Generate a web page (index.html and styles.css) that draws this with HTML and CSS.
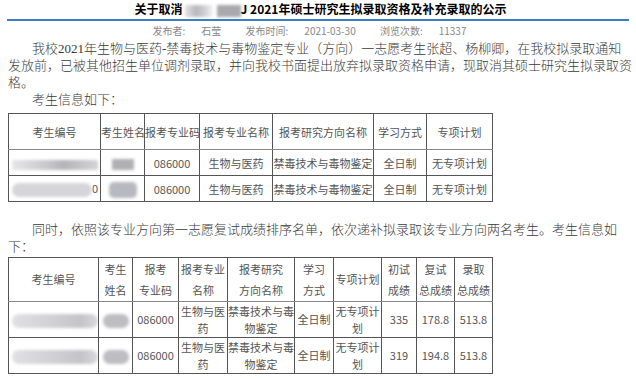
FILE: index.html
```html
<!DOCTYPE html>
<html lang="zh-CN">
<head>
    <meta charset="UTF-8">
    <meta name="viewport" content="width=device-width, initial-scale=1.0">
    <title>关于取消2021年硕士研究生拟录取资格及补充录取的公示</title>
    <link rel="stylesheet" href="styles.css">
</head>
<body>
    <div class="page">
        <h1 class="title">关于取消<span class="blur blur-title"></span><span class="blur blur-title2"></span>J 2021年硕士研究生拟录取资格及补充录取的公示</h1>
        <div class="rule"></div>
        <div class="meta">
            <span>发布者:</span><span class="val">石莹</span>
            <span>发布时间:</span><span class="val">2021-03-30</span>
            <span>浏览次数:</span><span class="val">11337</span>
        </div>

        <p class="text indent">我校2021年生物与医药-禁毒技术与毒物鉴定专业（方向）一志愿考生张超、杨柳卿，在我校拟录取通知发放前，已被其他招生单位调剂录取，并向我校书面提出放弃拟录取资格申请，现取消其硕士研究生拟录取资格。</p>
        <p class="text indent">考生信息如下：</p>

        <table class="grid grid-one">
            <colgroup>
                <col style="width:92px"><col style="width:44px"><col style="width:55px"><col style="width:73px">
                <col style="width:101px"><col style="width:53px"><col style="width:66px">
            </colgroup>
            <tr class="head">
                <td>考生编号</td><td>考生姓名</td><td>报考专业码</td><td>报考专业名称</td>
                <td>报考研究方向名称</td><td>学习方式</td><td>专项计划</td>
            </tr>
            <tr class="row">
                <td class="left"><span class="blur blur-id"></span></td>
                <td><span class="blur blur-name"></span></td>
                <td>086000</td><td>生物与医药</td><td>禁毒技术与毒物鉴定</td><td>全日制</td><td>无专项计划</td>
            </tr>
            <tr class="row">
                <td class="left"><span class="blur blur-id round"></span>0</td>
                <td><span class="blur blur-name dark"></span></td>
                <td>086000</td><td>生物与医药</td><td>禁毒技术与毒物鉴定</td><td>全日制</td><td>无专项计划</td>
            </tr>
        </table>

        <p class="text indent second">同时，依照该专业方向第一志愿复试成绩排序名单，依次递补拟录取该专业方向两名考生。考生信息如下：</p>

        <table class="grid grid-two">
            <colgroup>
                <col style="width:90px"><col style="width:34px"><col style="width:46px"><col style="width:49px">
                <col style="width:67px"><col style="width:39px"><col style="width:48px"><col style="width:35px">
                <col style="width:38px"><col style="width:38px">
            </colgroup>
            <tr class="head">
                <td>考生编号</td><td>考生<br>姓名</td><td>报考<br>专业码</td><td>报考专业<br>名称</td>
                <td>报考研究<br>方向名称</td><td>学习<br>方式</td><td>专项计划</td>
                <td>初试<br>成绩</td><td>复试<br>总成绩</td><td>录取<br>总成绩</td>
            </tr>
            <tr class="row">
                <td class="left"><span class="blur blur-id wide"></span></td>
                <td><span class="blur blur-name small"></span></td>
                <td>086000</td><td>生物与医<br>药</td><td>禁毒技术与毒<br>物鉴定</td><td>全日制</td>
                <td>无专项计<br>划</td><td>335</td><td>178.8</td><td>513.8</td>
            </tr>
            <tr class="row">
                <td class="left"><span class="blur blur-id wide"></span></td>
                <td><span class="blur blur-name small dark"></span></td>
                <td>086000</td><td>生物与医<br>药</td><td>禁毒技术与毒<br>物鉴定</td><td>全日制</td>
                <td>无专项计<br>划</td><td>319</td><td>194.8</td><td>513.8</td>
            </tr>
        </table>
    </div>
</body>
</html>
```

FILE: styles.css
```css
body { margin: 0; background: #fff; }
.page { width: 625px; padding-left: 8px; }

.title { margin: 0; height: 18px; font: bold 12px/18px "Noto Sans CJK SC", sans-serif; color: #000; text-align: center; }
.rule { height: 2px; width: 622px; margin-left: -1px; margin-top: 1px; background: #3d7cc9; }
.meta { margin-top: 3px; font: 10px/14px "Noto Sans CJK SC", sans-serif; color: #888; text-align: center; }
.meta span { margin-right: 16px; }
.meta .val { margin-right: 22px; }

.text { margin: 0; font: 300 13px/17px "Liberation Serif", "Noto Sans CJK SC", serif; color: #3a3a3a; }
.indent { text-indent: 24px; }
.text:first-of-type { margin-top: 2px; }
.second { margin-top: 19px; margin-bottom: 2px; }

.grid { border-collapse: collapse; table-layout: fixed; width: 485px; font: 11px "Noto Sans CJK SC", sans-serif; color: #555; }
.grid-one { margin-top: 5px; }
.grid td { border: 1px solid #555; padding: 0; text-align: center; vertical-align: middle; white-space: nowrap; overflow: hidden; }
.grid .head td { border-bottom-color: #888; }
.grid-one .head td { height: 35px; }
.grid-one .row td { height: 25px; }
.grid-two .head td { height: 43px; line-height: 21px; }
.grid-two .row td { height: 35px; line-height: 17px; }
.grid td.left { text-align: left; }

.blur { display: inline-block; vertical-align: middle; background: #c9c9ce; filter: blur(1.5px); }
.blur-title { width: 28px; height: 12px; margin-left: 2px; background: linear-gradient(90deg, #e4e4e8 0, #b8b8bc 40%, #d0d0d4 70%, #f4f4f6 100%); }
.blur-title2 { width: 24px; height: 12px; margin-left: 4px; background: #a8a8ad; }
.blur-id { width: 86px; height: 10px; margin-left: 3px; background: linear-gradient(90deg, #e6e6e8, #c8c8cc 40%, #b4b4b8 60%, #d4d4d8); }
.blur-id.round { width: 80px; height: 14px; border-radius: 7px; background: #d6d6da; }
.blur-id.wide { width: 86px; height: 14px; border-radius: 7px; background: linear-gradient(90deg, #e0e0e3, #d0d0d4 50%, #c4c4c8 80%, #dadadd); }
.blur-name { width: 22px; height: 11px; background: #b0b0b4; }
.blur-name.dark { width: 28px; height: 16px; border-radius: 5px; background: #b8b8c0; }
.blur-name.small { width: 26px; height: 14px; border-radius: 7px; background: #bdbdc2; }
```
